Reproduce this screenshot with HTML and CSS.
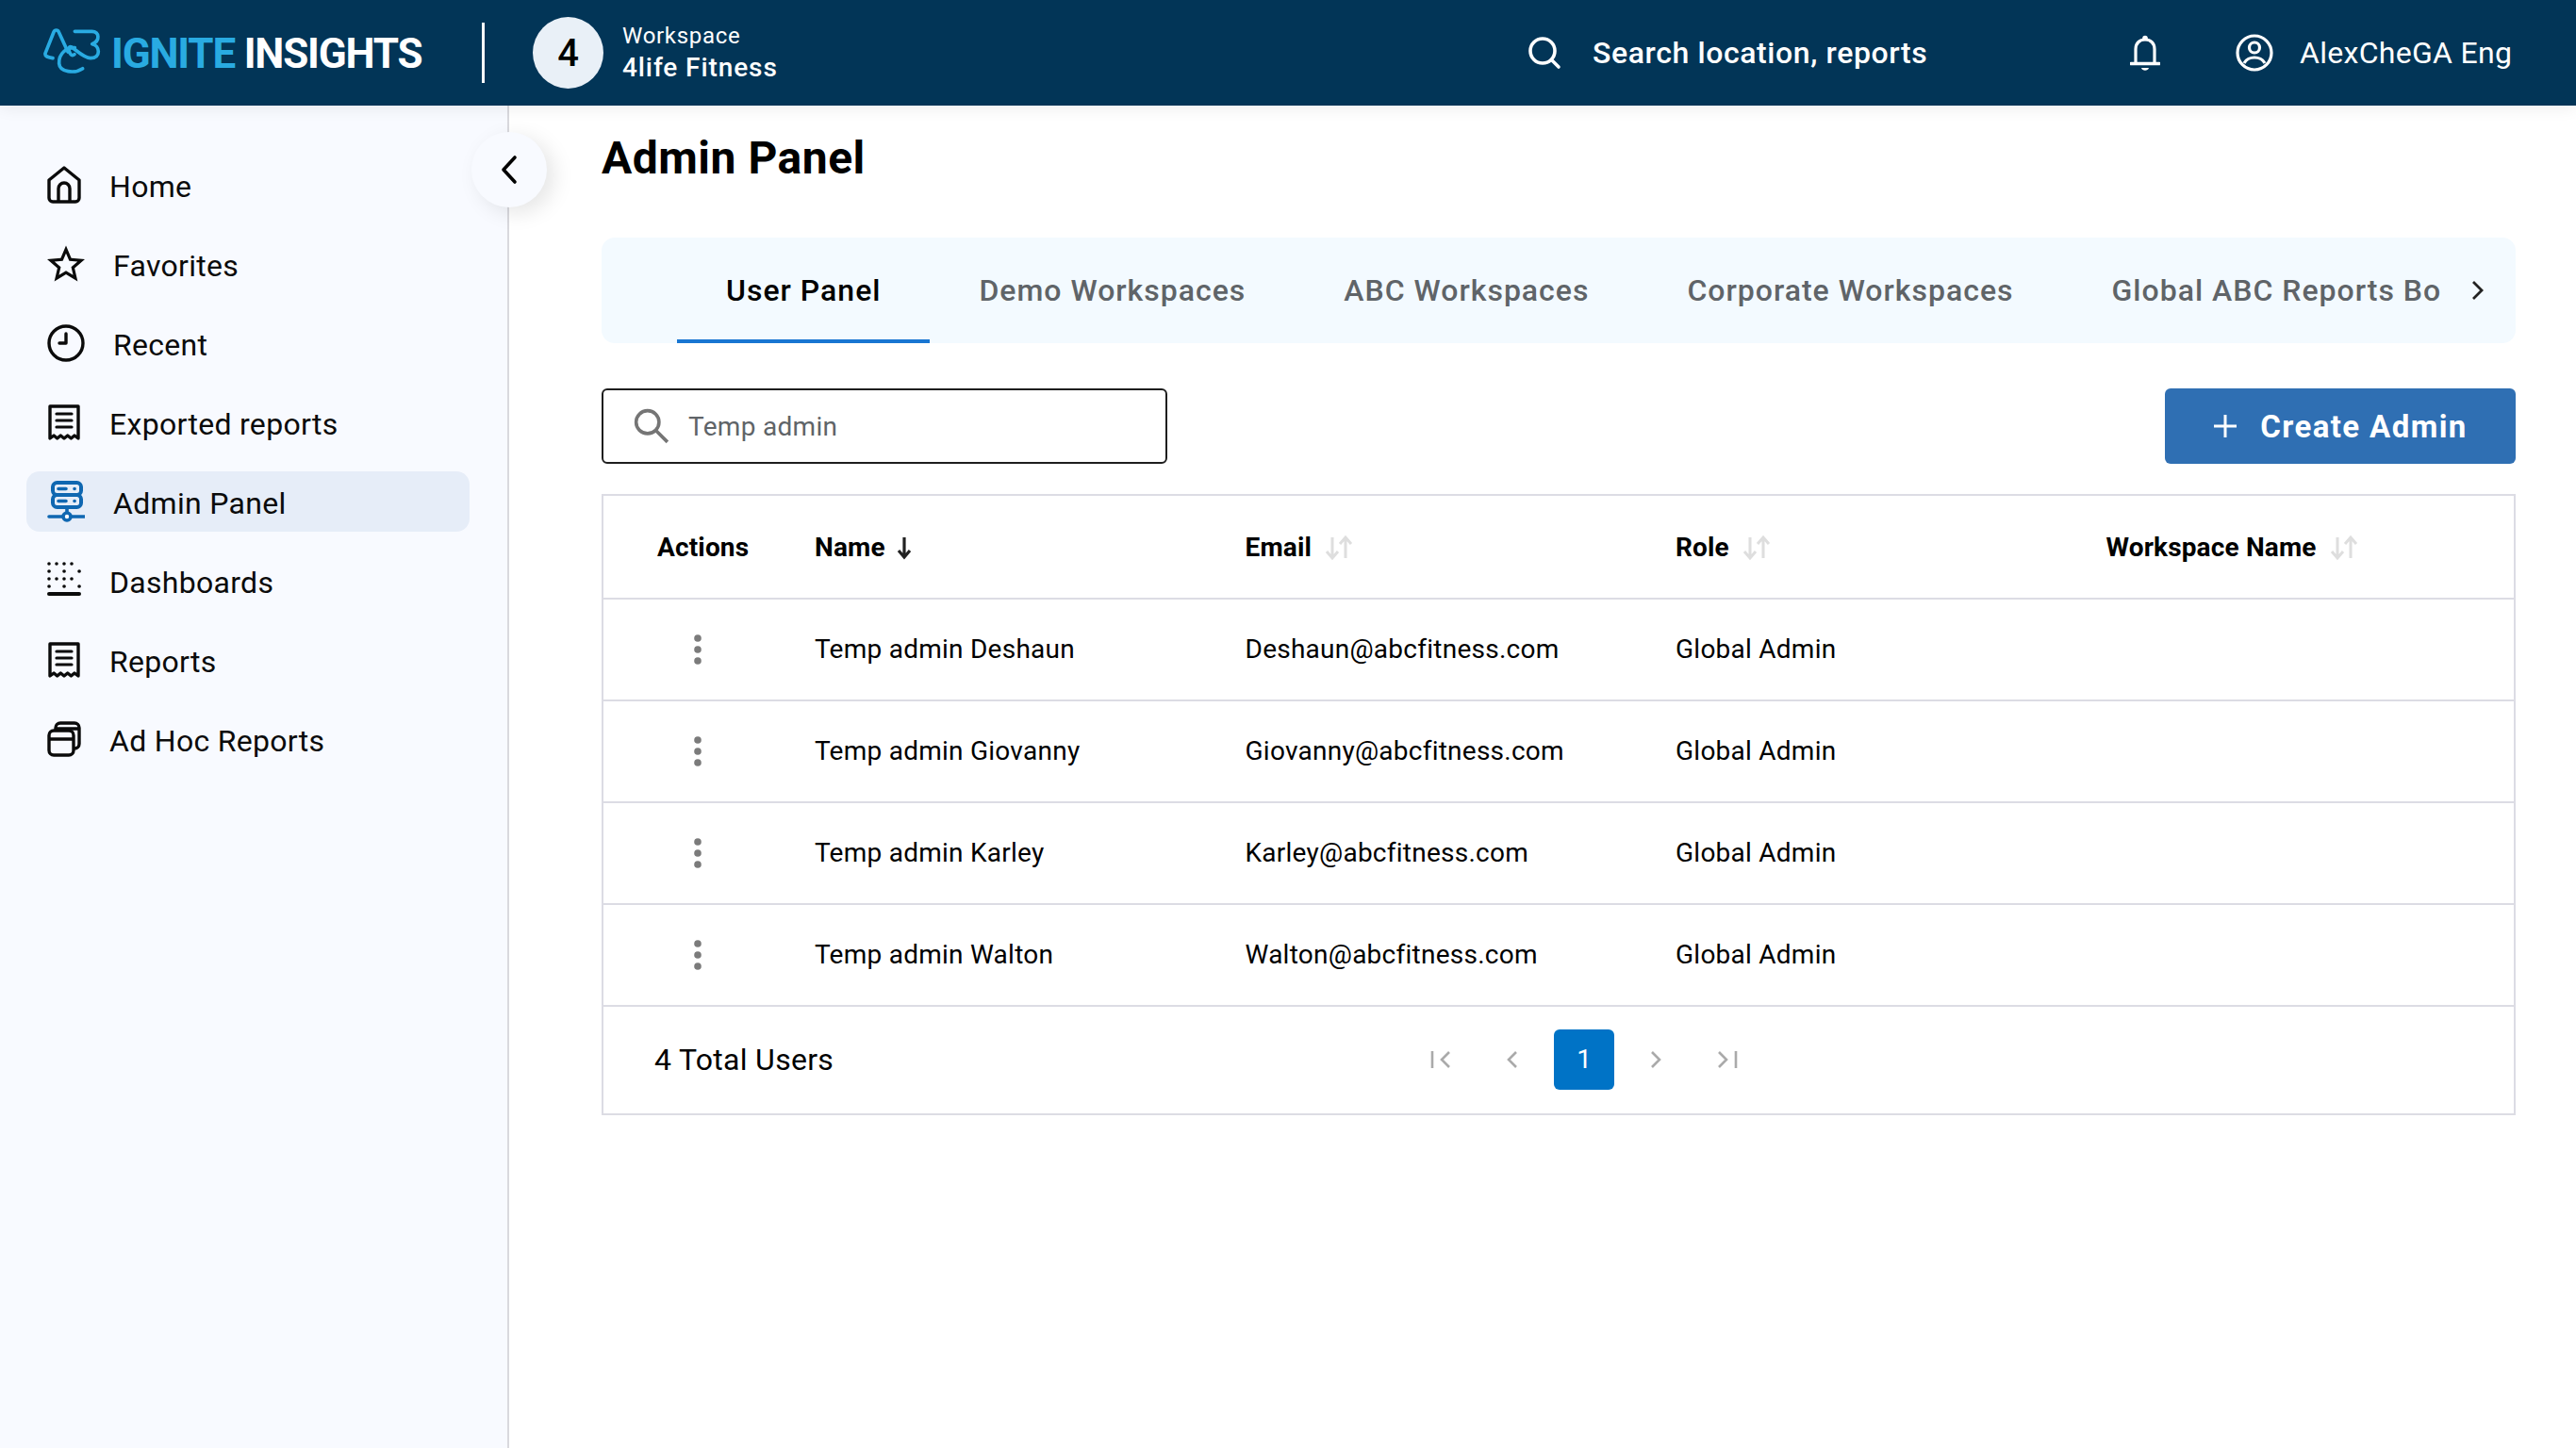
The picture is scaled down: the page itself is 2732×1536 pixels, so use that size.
FILE: index.html
```html
<!DOCTYPE html>
<html lang="en">
<head>
  <meta charset="UTF-8">
  <meta name="viewport" content="width=device-width, initial-scale=1.0">
  <title>Admin Panel</title>
  <link rel="stylesheet" href="styles.css">
</head>
<body>
  <svg class="defs" width="0" height="0">
    <symbol id="i-receipt" viewBox="0 0 36 40">
      <path d="M3 37V3h30v34l-4-3-3.600 3-3.700-3-3.700 3-3.700-3-3.600 3-3.600-3z" fill="none" stroke="currentColor" stroke-width="3.400" stroke-linejoin="round"/>
      <path d="M10 11h16M10 18h16M10 25h16" stroke="currentColor" stroke-width="3.200" stroke-linecap="round"/>
    </symbol>
    <symbol id="i-sort" viewBox="0 0 32 28">
      <path d="M9 3v21M3 18l6 7 6-7M23 25V4M17 10l6-7 6 7" fill="none" stroke="#dedede" stroke-width="3"/>
    </symbol>
    <symbol id="i-dots" viewBox="0 0 8 32">
      <circle cx="4" cy="4" r="3.800" fill="#7b7b7b"/><circle cx="4" cy="16" r="3.800" fill="#7b7b7b"/><circle cx="4" cy="28" r="3.800" fill="#7b7b7b"/>
    </symbol>
  </svg>

  <header class="topbar">
    <div class="brand">
      <svg class="brand-mark" viewBox="0 0 186 156" fill="none" stroke="#29abe2" stroke-width="11" stroke-linecap="round" stroke-linejoin="round">
        <path d="M30 95C15 92 4 90 6 80L33 12c3-8 13-8 16 0l29 63"/>
        <path d="M100 10h55c23 0 27 30 0 40 25 5 30 45-5 45-20 0-45-25-60-35-10-5-12 5-5 20 3 6 8 8 14 3"/>
        <path d="M100 62c-25-2-52 18-50 50 2 28 50 33 75 16"/>
      </svg>
      <span class="brand-name"><span class="brand-blue">IGNITE</span> INSIGHTS</span>
    </div>
    <div class="topbar-divider"></div>
    <div class="ws-badge">4</div>
    <div class="ws-info">
      <div class="ws-label">Workspace</div>
      <div class="ws-name">4life Fitness</div>
    </div>
    <div class="top-search">
      <svg class="top-search-icon" viewBox="0 0 36 36" fill="none" stroke="#fff" stroke-width="3.600" stroke-linecap="round">
        <circle cx="16" cy="16" r="13"/><path d="M26 26l7 7"/>
      </svg>
      <span>Search location, reports</span>
    </div>
    <svg class="bell" viewBox="0 0 32 38" fill="none" stroke="#fff" stroke-width="3.200">
      <circle cx="16" cy="3.500" r="2.800" fill="#fff" stroke="none"/>
      <path d="M6 31V15c0-6 4-10 10-10s10 4 10 10v16"/>
      <path d="M1 30.500h30" stroke-width="3.600" stroke-linecap="round"/>
      <path d="M12 35h8c-1 3.500-7 3.500-8 0z" fill="#fff" stroke="none"/>
    </svg>
    <svg class="user-icon" viewBox="0 0 40 40" fill="none" stroke="#fff" stroke-width="3.200">
      <circle cx="20" cy="20" r="18"/><circle cx="20" cy="14.500" r="5.500"/>
      <path d="M9 31c2-4 7-6 11-6s9 2 11 6"/>
    </svg>
    <span class="user-name">AlexCheGA Eng</span>
  </header>

  <div class="layout">
    <aside class="sidebar">
      <nav class="nav">
        <a class="nav-item">
          <svg class="nav-icon" viewBox="0 0 36 40" fill="none" stroke="currentColor" stroke-width="3.400" stroke-linejoin="round">
            <path d="M2 15 18 2l16 13v19a4 4 0 0 1-4 4H6a4 4 0 0 1-4-4z"/>
            <path d="M12 38V24a6 6 0 0 1 12 0v14"/>
          </svg>
          <span>Home</span>
        </a>
        <a class="nav-item">
          <svg class="nav-icon nav-icon-lg" viewBox="2 2 20 19.500" fill="currentColor">
            <path d="M22 9.240l-7.190-.62L12 2 9.190 8.630 2 9.240l5.460 4.730L5.820 21 12 17.270 18.180 21l-1.630-7.030L22 9.240zM12 15.400l-3.760 2.270 1-4.280-3.320-2.880 4.380-.38L12 6.100l1.710 4.040 4.380.38-3.320 2.880 1 4.280L12 15.400z"/>
          </svg>
          <span>Favorites</span>
        </a>
        <a class="nav-item">
          <svg class="nav-icon nav-icon-lg" viewBox="0 0 40 40" fill="none" stroke="currentColor" stroke-width="3.400" stroke-linecap="round" stroke-linejoin="round">
            <circle cx="20" cy="20" r="18"/><path d="M20 10v10h-7"/>
          </svg>
          <span>Recent</span>
        </a>
        <a class="nav-item">
          <svg class="nav-icon"><use href="#i-receipt"/></svg>
          <span>Exported reports</span>
        </a>
        <a class="nav-item active">
          <svg class="nav-icon nav-icon-server" viewBox="0 0 40 44" fill="none" stroke="currentColor" stroke-width="4" stroke-linecap="round">
            <rect x="6" y="2" width="30" height="13" rx="4.500"/><rect x="6" y="15" width="30" height="13" rx="4.500"/>
            <path d="M12 8.500h8M12 21.500h8M29 8.500h.1M29 21.500h.1M21 28v9M2 38h38" stroke-width="3.600"/>
            <circle cx="21" cy="38" r="4" fill="#f8faff" stroke-width="3.600"/>
          </svg>
          <span>Admin Panel</span>
        </a>
        <a class="nav-item">
          <svg class="nav-icon" viewBox="0 0 36 40" fill="none" stroke="currentColor" stroke-linecap="round">
            <path d="M2 2h32M2 18h32" stroke-width="3.600" stroke-dasharray="0 8"/>
            <path d="M2 10h.1M18 10h.1M34 10h.1M2 26h.1M18 26h.1M34 26h.1" stroke-width="3.600"/>
            <path d="M2 34h32" stroke-width="4"/>
          </svg>
          <span>Dashboards</span>
        </a>
        <a class="nav-item">
          <svg class="nav-icon"><use href="#i-receipt"/></svg>
          <span>Reports</span>
        </a>
        <a class="nav-item">
          <svg class="nav-icon" viewBox="0 0 36 40" fill="none" stroke="currentColor" stroke-width="3.400" stroke-linejoin="round">
            <rect x="2" y="11" width="26" height="26" rx="5"/>
            <path d="M2 20h26M9 11V8a5 5 0 0 1 5-5h15a5 5 0 0 1 5 5v17a5 5 0 0 1-5 5h-1M9 9h25"/>
          </svg>
          <span>Ad Hoc Reports</span>
        </a>
      </nav>
    </aside>

    <button class="collapse-btn">
      <svg viewBox="0 0 20 32" fill="none" stroke="#000" stroke-width="3.600" stroke-linecap="round" stroke-linejoin="round"><path d="M16 3 4 16l12 13"/></svg>
    </button>

    <main class="content">
      <h1 class="page-title">Admin Panel</h1>

      <div class="tabs-bar">
        <div class="tabs">
          <a class="tab active">User Panel</a>
          <a class="tab">Demo Workspaces</a>
          <a class="tab">ABC Workspaces</a>
          <a class="tab">Corporate Workspaces</a>
          <a class="tab">Global ABC Reports Board</a>
        </div>
        <svg class="tabs-next" viewBox="0 0 14 24" fill="none" stroke="#222" stroke-width="2.800"><path d="M2 3l9 9-9 9"/></svg>
      </div>

      <div class="toolbar">
        <div class="search-box">
          <svg viewBox="0 0 36 36" fill="none" stroke="#757575" stroke-width="3.400"><circle cx="14" cy="14" r="11.500"/><path d="M22 22l12 12"/></svg>
          <span>Temp admin</span>
        </div>
        <button class="create-btn">
          <svg viewBox="0 0 26 26" fill="none" stroke="#fff" stroke-width="3"><path d="M13 1v24M1 13h24"/></svg>
          <span>Create Admin</span>
        </button>
      </div>

      <div class="table-wrap">
        <table class="users">
          <thead>
            <tr>
              <th class="col-actions">Actions</th>
              <th class="col-name">Name <svg class="sort-active" viewBox="0 0 18 28" fill="none" stroke="#222" stroke-width="3.200"><path d="M9 3v21M3 17l6 7 6-7"/></svg></th>
              <th class="col-email">Email <svg class="sort"><use href="#i-sort"/></svg></th>
              <th class="col-role">Role <svg class="sort"><use href="#i-sort"/></svg></th>
              <th>Workspace Name <svg class="sort"><use href="#i-sort"/></svg></th>
            </tr>
          </thead>
          <tbody>
            <tr>
              <td class="cell-dots"><svg class="dots"><use href="#i-dots"/></svg></td>
              <td>Temp admin Deshaun</td>
              <td>Deshaun@abcfitness.com</td>
              <td>Global Admin</td>
              <td></td>
            </tr>
            <tr>
              <td class="cell-dots"><svg class="dots"><use href="#i-dots"/></svg></td>
              <td>Temp admin Giovanny</td>
              <td>Giovanny@abcfitness.com</td>
              <td>Global Admin</td>
              <td></td>
            </tr>
            <tr>
              <td class="cell-dots"><svg class="dots"><use href="#i-dots"/></svg></td>
              <td>Temp admin Karley</td>
              <td>Karley@abcfitness.com</td>
              <td>Global Admin</td>
              <td></td>
            </tr>
            <tr>
              <td class="cell-dots"><svg class="dots"><use href="#i-dots"/></svg></td>
              <td>Temp admin Walton</td>
              <td>Walton@abcfitness.com</td>
              <td>Global Admin</td>
              <td></td>
            </tr>
          </tbody>
        </table>
        <div class="table-footer">
          <span class="total">4 Total Users</span>
          <div class="pager">
            <span class="page-btn"><svg viewBox="0 0 24 20" fill="none" stroke="#aaa" stroke-width="2.600"><path d="M3 1v18M21 2l-8 8 8 8"/></svg></span>
            <span class="page-btn"><svg viewBox="0 0 24 20" fill="none" stroke="#aaa" stroke-width="2.600"><path d="M16 2l-8 8 8 8"/></svg></span>
            <span class="page-btn current">1</span>
            <span class="page-btn"><svg viewBox="0 0 24 20" fill="none" stroke="#aaa" stroke-width="2.600"><path d="M8 2l8 8-8 8"/></svg></span>
            <span class="page-btn"><svg viewBox="0 0 24 20" fill="none" stroke="#aaa" stroke-width="2.600"><path d="M3 2l8 8-8 8M21 1v18"/></svg></span>
          </div>
        </div>
      </div>
    </main>
  </div>
</body>
</html>
```

FILE: styles.css
```css
* {
  box-sizing: border-box;
}

body {
  margin: 0;
  height: 1536px;
  overflow: hidden;
  font-family: Roboto, Arial, sans-serif;
  color: #000;
  background-color: #fff;
}

.defs {
  position: absolute;
}

/* top bar */
.topbar {
  position: relative;
  z-index: 2;
  display: flex;
  align-items: center;
  height: 112px;
  padding-left: 46px;
  background-color: #023557;
  color: #fff;
  box-shadow: 0 2px 16px rgba(0, 0, 0, 0.08);
}

.brand {
  display: flex;
  align-items: center;
  width: 465px;
}

.brand-mark {
  width: 62px;
  height: 52px;
  margin-right: 10px;
}

.brand-name {
  margin-top: 2px;
  font-size: 44px;
  font-weight: 700;
  letter-spacing: -1.2px;
  white-space: nowrap;
}

.brand-blue {
  color: #29abe2;
}

.topbar-divider {
  width: 3px;
  height: 64px;
  margin-right: 51px;
  background-color: #fff;
}

.ws-badge {
  display: flex;
  align-items: center;
  justify-content: center;
  width: 75px;
  height: 76px;
  margin-right: 20px;
  border-radius: 50%;
  background-color: #e9f0f7;
  color: #000;
  font-size: 40px;
  font-weight: 500;
}

.ws-info {
  width: 960px;
}

.ws-label {
  font-size: 24px;
  line-height: 32px;
  letter-spacing: 0.7px;
}

.ws-name {
  font-size: 28px;
  line-height: 36px;
  font-weight: 500;
  letter-spacing: 0.9px;
}

.top-search {
  display: flex;
  align-items: center;
  width: 639px;
  font-size: 32px;
  font-weight: 500;
  letter-spacing: 0.6px;
}

.top-search-icon {
  width: 36px;
  height: 36px;
  margin-right: 33px;
}

.bell {
  width: 32px;
  height: 38px;
  margin-right: 80px;
}

.user-icon {
  width: 40px;
  height: 40px;
  margin-right: 28px;
}

.user-name {
  font-size: 32px;
  letter-spacing: 0.3px;
  white-space: nowrap;
}

/* page layout */
.layout {
  position: relative;
  display: flex;
  height: 1424px;
}

.sidebar {
  flex: none;
  width: 540px;
  padding: 52px 40px 0 28px;
  background-color: #f8faff;
  border-right: 2px solid #d9d9de;
}

.nav {
  display: flex;
  flex-direction: column;
  gap: 20px;
}

.nav-item {
  display: flex;
  align-items: center;
  gap: 30px;
  height: 64px;
  padding-left: 22px;
  border-radius: 14px;
  font-size: 32px;
  letter-spacing: 0.3px;
  color: #0b0b0b;
}

.nav-item span {
  padding-top: 3px;
}

.nav-item.active {
  background-color: #e6edf8;
}

.nav-item.active .nav-icon {
  color: #0f67b1;
}

.nav-icon {
  flex: none;
  width: 36px;
  height: 40px;
}

.nav-icon-lg {
  width: 40px;
}

.nav-icon-server {
  width: 40px;
  height: 44px;
}

.collapse-btn {
  position: absolute;
  top: 28px;
  left: 500px;
  display: flex;
  align-items: center;
  justify-content: center;
  width: 80px;
  height: 80px;
  padding: 0;
  border: none;
  border-radius: 50%;
  background-color: #f8faff;
  box-shadow: 8px 6px 22px rgba(0, 0, 0, 0.1);
}

.collapse-btn svg {
  width: 20px;
  height: 32px;
}

/* main content */
.content {
  flex: none;
  width: 2030px;
  margin-left: 98px;
}

.page-title {
  margin: 24px 0 52px;
  font-size: 48px;
  line-height: 64px;
  font-weight: 700;
  letter-spacing: 0.5px;
}

.tabs-bar {
  display: flex;
  align-items: center;
  height: 112px;
  padding-left: 80px;
  border-radius: 14px;
  background-color: #f3faff;
}

.tabs {
  display: flex;
  align-self: stretch;
  width: 1870px;
  overflow: hidden;
}

.tab {
  flex: none;
  display: flex;
  align-items: center;
  padding: 0 52px;
  border-top: 4px solid transparent;
  border-bottom: 4px solid transparent;
  font-size: 32px;
  font-weight: 500;
  letter-spacing: 1px;
  color: #5f6468;
  white-space: nowrap;
}

.tab.active {
  border-bottom-color: #1976d2;
  color: #000;
}

.tabs-next {
  width: 14px;
  height: 24px;
  margin-left: 33px;
}

.toolbar {
  display: flex;
  justify-content: space-between;
  margin-top: 48px;
}

.search-box {
  display: flex;
  align-items: center;
  gap: 20px;
  width: 600px;
  height: 80px;
  padding-left: 32px;
  border: 2px solid #1e1e1e;
  border-radius: 6px;
  font-size: 28px;
  letter-spacing: 0.3px;
  color: #5f6468;
}

.search-box svg {
  width: 38px;
  height: 38px;
}

.create-btn {
  display: flex;
  align-items: center;
  justify-content: center;
  gap: 24px;
  width: 372px;
  height: 80px;
  padding: 0;
  border: none;
  border-radius: 6px;
  background-color: #2f6fb3;
  color: #fff;
  font-family: Roboto, Arial, sans-serif;
  font-size: 33px;
  font-weight: 700;
  letter-spacing: 1.4px;
}

.create-btn svg {
  width: 26px;
  height: 26px;
}

/* table */
.table-wrap {
  margin-top: 32px;
  border: 2px solid #dcdce4;
}

.users {
  width: 100%;
  border-collapse: collapse;
  table-layout: fixed;
  font-size: 28px;
}

.users th {
  height: 109px;
  padding: 0;
  font-weight: 700;
  letter-spacing: 0.15px;
  text-align: left;
  border-bottom: 2px solid #dcdce4;
}

.users td {
  height: 108px;
  padding: 0 0 2px;
  letter-spacing: 0.25px;
  border-bottom: 2px solid #dcdce4;
}

.users th.col-actions {
  width: 224px;
  padding-left: 57px;
}

.col-name,
.col-email,
.col-role {
  width: 456.5px;
}

.sort-active {
  width: 18px;
  height: 28px;
  margin-left: 4px;
  vertical-align: -5px;
}

.sort {
  width: 32px;
  height: 28px;
  margin-left: 6px;
  vertical-align: -5px;
}

.users td.cell-dots {
  padding: 0 0 0 96px;
}

.dots {
  display: block;
  width: 8px;
  height: 32px;
}

.table-footer {
  display: flex;
  align-items: center;
  height: 113px;
  padding: 0 0 2px 54px;
}

.total {
  width: 802px;
  font-size: 32px;
  letter-spacing: 0.3px;
}

.pager {
  display: flex;
  gap: 12px;
}

.page-btn {
  display: flex;
  align-items: center;
  justify-content: center;
  width: 64px;
  height: 64px;
  font-size: 28px;
}

.page-btn svg {
  width: 24px;
  height: 20px;
}

.page-btn.current {
  border-radius: 6px;
  background-color: #0073c6;
  color: #fff;
}
```
